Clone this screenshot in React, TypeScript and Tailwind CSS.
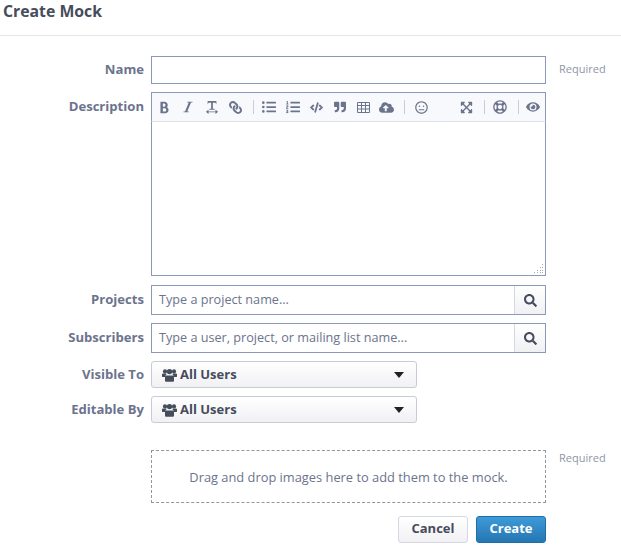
import {
  FaCloudUploadAlt,
  FaCode,
  FaExpandArrowsAlt,
  FaEye,
  FaLink,
  FaListOl,
  FaListUl,
  FaQuoteRight,
  FaRegLifeRing,
  FaRegMeh,
  FaSearch,
} from 'react-icons/fa';
import { ImBold, ImItalic, ImTextWidth } from 'react-icons/im';

const labelClass = 'w-[144px] shrink-0 text-right text-[13.1px] font-bold text-[#6b748c]';
const inputBorder = 'border border-[#8c98b8]';

function Sep() {
  return <span className="mx-[6px] h-[14px] w-px bg-[#c7ccd9]" />;
}

function Tool({ children, className = '' }: { children: React.ReactNode; className?: string }) {
  return <span className={`flex w-[24px] justify-center text-[#6b748c] ${className}`}>{children}</span>;
}

function UsersIcon() {
  return (
    <svg width="15" height="14" viewBox="0 0 15 14" fill="currentColor">
      <circle cx="3" cy="3.4" r="2.1" />
      <circle cx="12" cy="3.4" r="2.1" />
      <path d="M0 6.6C0 5.9.6 5.6 1.4 5.6h2.4c.5 0 .8.2 1 .5-.9.6-1.5 1.6-1.5 3H1C.4 9.1 0 8.7 0 8.2zM15 6.6c0-.7-.6-1-1.4-1h-2.4c-.5 0-.8.2-1 .5.9.6 1.5 1.6 1.5 3H14c.6 0 1-.4 1-.9z" />
      <circle cx="7.5" cy="3.6" r="2.7" />
      <path d="M4.3 7.4h6.4c.8 0 1.3.6 1.3 1.4v3.6c0 .8-.5 1.3-1.3 1.3H4.3c-.8 0-1.3-.5-1.3-1.3V8.8c0-.8.5-1.4 1.3-1.4z" />
    </svg>
  );
}

function TableIcon() {
  return (
    <svg width="13" height="11" viewBox="0 0 13 11" fill="none" stroke="currentColor">
      <path d="M.5.5h12v10H.5zM.5 3.5h12M.5 7h12M4.5.5v10M8.5.5v10" />
    </svg>
  );
}

function Tokenizer({ label, placeholder }: { label: string; placeholder: string }) {
  return (
    <div className="flex items-center">
      <div className={labelClass}>{label}</div>
      <div className={`ml-[7px] flex h-[30px] w-[395px] ${inputBorder}`}>
        <div className="flex-1 pl-[7px] text-[12.65px] leading-[27px] text-[#6b748c]">{placeholder}</div>
        <div className="flex w-[31px] items-center justify-center border-l border-[#d5d8e2] bg-gradient-to-b from-white to-[#f1f1f4] text-[#464c5c]">
          <FaSearch className="text-[13px]" />
        </div>
      </div>
    </div>
  );
}

function SelectRow({ label }: { label: string }) {
  return (
    <div className="flex items-center">
      <div className={labelClass}>{label}</div>
      <div className="ml-[7px] flex h-[27px] w-[266px] items-center rounded-[3px] border border-[#c7ccd9] bg-gradient-to-b from-white to-[#f1f1f4] pl-[10px] pr-[12px] text-[#464c5c]">
        <UsersIcon />
        <span className="ml-[3px] flex-1 text-[13px] font-bold">All Users</span>
        <span className="h-0 w-0 border-x-[5.5px] border-t-[6px] border-x-transparent border-t-[#222]" />
      </div>
    </div>
  );
}

export default function App() {
  return (
    <div className="h-[551px] w-[621px] overflow-hidden bg-white font-['Open_Sans','Noto_Sans',sans-serif]">
      <div className="h-[36px] border-b border-[#e3e6ea] pl-[3px] text-[15.8px] font-bold leading-[22px] text-[#464c5c]">
        Create Mock
      </div>

      <div className="mt-[20px] flex items-center">
        <div className={labelClass}>Name</div>
        <div className={`ml-[7px] h-[28px] w-[395px] ${inputBorder}`} />
        <div className="ml-[13px] -translate-y-px text-[11px] text-[#8f95a6]">Required</div>
      </div>

      <div className="mt-[8px] flex">
        <div className={`${labelClass} pt-[5px]`}>Description</div>
        <div className="ml-[7px] w-[395px]">
          <div className="flex h-[29px] items-center border-x border-t border-[#8c98b8] bg-[#f8f9fc] border-b-0 pl-[1px]">
            <Tool><ImBold className="text-[13px]" /></Tool>
            <Tool><ImItalic className="text-[12px]" /></Tool>
            <Tool><ImTextWidth className="text-[14px]" /></Tool>
            <Tool><FaLink className="-scale-x-100 text-[13px]" /></Tool>
            <Sep />
            <Tool className="-ml-[2px]"><FaListUl className="text-[14px]" /></Tool>
            <Tool><FaListOl className="text-[14px]" /></Tool>
            <Tool><FaCode className="text-[13px]" /></Tool>
            <Tool><FaQuoteRight className="text-[12px]" /></Tool>
            <Tool><TableIcon /></Tool>
            <Tool><FaCloudUploadAlt className="text-[15px]" /></Tool>
            <Sep />
            <Tool className="-ml-[2px]"><FaRegMeh className="text-[13px]" /></Tool>
            <Tool className="ml-[22px]"><FaExpandArrowsAlt className="text-[13px]" /></Tool>
            <Sep />
            <Tool className="-ml-[3px]"><FaRegLifeRing className="text-[14px]" /></Tool>
            <Sep />
            <Tool className="-ml-[3px]"><FaEye className="text-[14px]" /></Tool>
          </div>
          <div className="relative h-[155px] border-x border-b border-[#8c98b8] border-t border-t-[#dde3ea]">
            <svg className="absolute bottom-[1px] right-[1px]" width="10" height="10" viewBox="0 0 10 10" fill="#a8adb9">
              <rect x="8" y="0" width="1" height="1" />
              <rect x="6" y="3" width="1" height="1" />
              <rect x="8" y="3" width="1" height="1" />
              <rect x="3" y="6" width="1" height="1" />
              <rect x="6" y="6" width="1" height="1" />
              <rect x="8" y="6" width="1" height="1" />
              <rect x="0" y="8" width="1" height="1" />
              <rect x="3" y="8" width="1" height="1" />
              <rect x="6" y="8" width="1" height="1" />
              <rect x="8" y="8" width="1" height="1" />
            </svg>
          </div>
        </div>
      </div>

      <div className="mt-[9px] flex flex-col gap-[8px]">
        <Tokenizer label="Projects" placeholder="Type a project name..." />
        <Tokenizer label="Subscribers" placeholder="Type a user, project, or mailing list name..." />
        <SelectRow label="Visible To" />
        <SelectRow label="Editable By" />
      </div>

      <div className="mt-[27px] flex">
        <div className="ml-[151px] flex h-[53px] w-[395px] items-center justify-center border border-dashed border-[#92969d] pt-[2px] text-[12.85px] text-[#6b748c]">
          Drag and drop images here to add them to the mock.
        </div>
        <div className="ml-[13px] text-[11px] text-[#8f95a6]">Required</div>
      </div>

      <div className="mt-[13px] flex w-[546px] justify-end gap-[8px]">
        <button className="h-[27px] w-[70px] rounded-[3px] border border-[#d5d8e2] bg-gradient-to-b from-white to-[#f1f1f4] pb-[1px] text-[13px] font-bold text-[#464c5c]">
          Cancel
        </button>
        <button className="h-[27px] w-[70px] rounded-[3px] border border-[#1e6fa8] bg-gradient-to-b from-[#3e9ad9] to-[#2577b1] pb-[1px] text-[13px] font-bold text-white">
          Create
        </button>
      </div>
    </div>
  );
}
